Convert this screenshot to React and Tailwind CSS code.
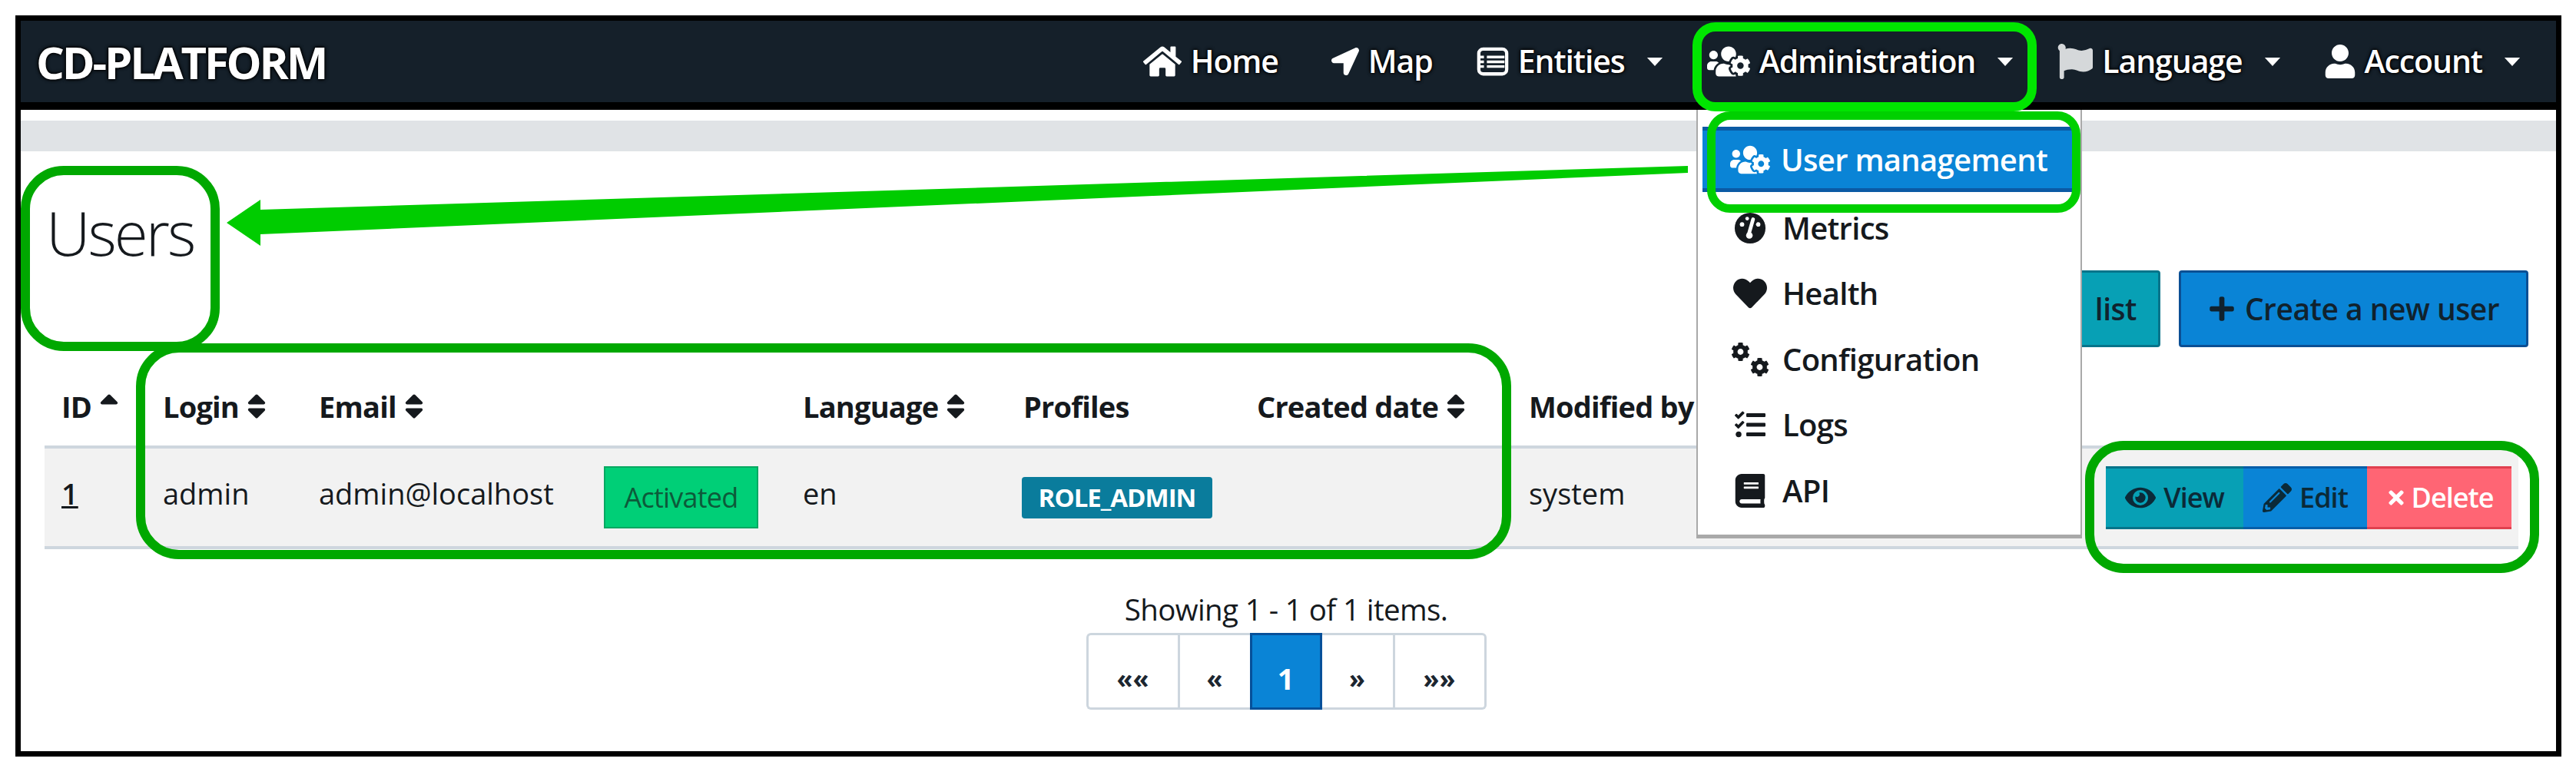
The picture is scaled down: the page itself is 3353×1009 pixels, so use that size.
import React from "react";
import {
  FaHome,
  FaLocationArrow,
  FaUsersCog,
  FaFlag,
  FaUser,
  FaHeart,
  FaCog,
  FaTasks,
  FaBook,
  FaPlus,
  FaEye,
  FaPencilAlt,
  FaTimes,
  FaSort,
  FaSortUp,
} from "react-icons/fa";

const glow = "[text-shadow:0_0_5px_#000,0_0_4px_#000,0_0_2px_#000]";

const EntitiesIcon = ({ className }) => (
  <svg viewBox="0 0 44 40" className={className} fill="none" stroke="currentColor">
    <rect x="3" y="3" width="38" height="34" rx="6" strokeWidth="4.5" />
    <path d="M14 14H38M14 20.5H38M14 27H38" strokeWidth="3.5" />
    <path d="M5 14H10M5 20.5H10M5 27H10" strokeWidth="3.5" />
  </svg>
);

const MetricsIcon = ({ className }) => (
  <svg viewBox="0 0 44 44" className={className}>
    <circle cx="22" cy="22" r="21" fill="currentColor" />
    <path d="M20 31L26 10" stroke="#fff" strokeWidth="5" strokeLinecap="round" />
    <circle cx="21" cy="32" r="4.5" fill="#fff" />
    <circle cx="11" cy="17" r="3" fill="#fff" />
    <circle cx="18" cy="9" r="2.5" fill="#fff" />
    <circle cx="33" cy="17" r="3" fill="#fff" />
  </svg>
);

const Caret = ({ className }) => (
  <svg viewBox="0 0 24 14" className={className} fill="currentColor">
    <path d="M1 1H23L12 13Z" />
  </svg>
);

const navItems = [
  { label: "Home", Icon: FaHome, icon: "w-[50px] h-[46px]", extra: "mr-[12px]" },
  { label: "Map", Icon: FaLocationArrow, icon: "w-[36px] h-[36px]" },
  { label: "Entities", Icon: EntitiesIcon, icon: "w-[42px] h-[40px]", caret: true },
  { label: "Administration", Icon: FaUsersCog, icon: "w-[56px] h-[50px]", caret: true },
  { label: "Language", Icon: FaFlag, icon: "w-[46px] h-[46px] text-[#d5d8da]", caret: true },
  { label: "Account", Icon: FaUser, icon: "w-[40px] h-[44px]", caret: true },
];

const SortHead = ({ label, up }) => (
  <span className="inline-flex items-center gap-[6px]">
    {label}
    {up ? (
      <FaSortUp className="w-[34px] h-[40px]" />
    ) : (
      <FaSort className="w-[34px] h-[40px]" />
    )}
  </span>
);

const NavBar = () => (
  <div className="h-[116px] shrink-0 bg-[#15202a] border-b-[10px] border-black flex items-center justify-between pl-[20px] pr-[46px] text-white font-semibold">
    <span className={`text-[58px] font-bold tracking-[-3.2px] ${glow}`}>
      CD-PLATFORM
    </span>
    <div className="flex items-center gap-[57px] text-[41px] tracking-[-1.1px]">
      {navItems.map(({ label, Icon, icon, caret, extra }) => (
        <div key={label} className={`flex items-center gap-[12px] ${glow} ${extra || ""}`}>
          <Icon className={icon} />
          <span>{label}</span>
          {caret && <Caret className="w-[22px] h-[13px] ml-[16px]" />}
        </div>
      ))}
    </div>
  </div>
);

const ConfigIcon = () => (
  <span className="w-[50px] h-[46px] flex justify-between">
    <FaCog className="w-[26px] h-[26px] self-start" />
    <FaCog className="w-[26px] h-[26px] self-end" />
  </span>
);

const MenuRow = ({ label, icon }) => (
  <div className="h-[85.5px] flex items-center gap-[18px] pl-[44px]">
    <span className="w-[48px] flex justify-center">{icon}</span>
    <span>{label}</span>
  </div>
);

const Dropdown = () => (
  <div className="absolute left-[2208px] top-[143px] w-[502px] h-[558px] bg-white border-x-[2px] border-b-[5px] border-[#a9a9a9] pt-[22px] font-semibold text-[40px] text-[#15191d] tracking-[-0.7px]">
    <div className="h-[85px] mb-[4px] ml-[6px] mr-[8px] bg-[#0a84d6] border-y-[5px] border-[#0b5aa4] flex items-center gap-[14px] pl-[36px] text-white">
      <FaUsersCog className="w-[52px] h-[50px]" />
      <span>User management</span>
    </div>
    <MenuRow label="Metrics" icon={<MetricsIcon className="w-[42px] h-[42px]" />} />
    <MenuRow label="Health" icon={<FaHeart className="w-[44px] h-[44px]" />} />
    <MenuRow label="Configuration" icon={<ConfigIcon />} />
    <MenuRow label="Logs" icon={<FaTasks className="w-[40px] h-[40px]" />} />
    <MenuRow label="API" icon={<FaBook className="w-[40px] h-[44px]" />} />
  </div>
);

const UsersTable = () => (
  <table className="w-[3220px] table-fixed border-collapse text-[38px] text-[#15191d]">
    <colgroup>
      <col className="w-[132px]" />
      <col className="w-[203px]" />
      <col className="w-[371px]" />
      <col className="w-[259px]" />
      <col className="w-[287px]" />
      <col className="w-[304px]" />
      <col className="w-[354px]" />
      <col className="w-[432px]" />
      <col className="w-[320px]" />
      <col />
    </colgroup>
    <thead>
      <tr className="h-[104px] text-left font-bold tracking-[-0.8px]">
        <th className="pl-[22px]"><SortHead label="ID" up /></th>
        <th className="pl-[22px]"><SortHead label="Login" /></th>
        <th className="pl-[22px]"><SortHead label="Email" /></th>
        <th></th>
        <th className="pl-[22px]"><SortHead label="Language" /></th>
        <th className="pl-[22px]">Profiles</th>
        <th className="pl-[22px] whitespace-nowrap"><SortHead label="Created date" /></th>
        <th className="pl-[22px] whitespace-nowrap">Modified by</th>
        <th></th>
        <th></th>
      </tr>
    </thead>
    <tbody>
      <tr className="h-[131px] bg-[#f2f2f2] border-y-[4px] border-[#ced6de]">
        <td className="pl-[22px] pb-[10px] font-semibold underline">1</td>
        <td className="pl-[22px] pb-[10px]">admin</td>
        <td className="pl-[22px] pb-[10px] whitespace-nowrap">admin@localhost</td>
        <td className="pl-[22px]">
          <span className="w-[201px] h-[81px] bg-[#00cf77] border-[2px] border-[#08a862] text-[#0d5a3a] text-[36px] flex items-center justify-center tracking-[-0.8px]">
            Activated
          </span>
        </td>
        <td className="pl-[22px] pb-[10px]">en</td>
        <td className="pl-[20px]">
          <span className="w-[248px] h-[54px] rounded-[4px] bg-[#0a7c9c] text-white font-bold text-[33px] flex items-center justify-center tracking-[-1px]">
            ROLE_ADMIN
          </span>
        </td>
        <td></td>
        <td className="pl-[22px] pb-[10px]">system</td>
        <td></td>
        <td className="pl-[21px]">
          <div className="flex h-[82px] w-[528px] text-[36px] font-semibold tracking-[-1px]">
            <span className="w-[179px] bg-[#07a0b5] border-y-[3px] border-[#06748a] flex items-center justify-center gap-[10px] text-[#0b2a38]">
              <FaEye className="w-[40px] h-[40px]" /> View
            </span>
            <span className="w-[161px] bg-[#0a84d6] border-y-[3px] border-[#075ea8] flex items-center justify-center gap-[10px] text-[#0b2a38]">
              <FaPencilAlt className="w-[38px] h-[38px]" /> Edit
            </span>
            <span className="w-[188px] bg-[#ff6574] border-y-[3px] border-[#e0404f] flex items-center justify-center gap-[6px] text-white">
              <FaTimes className="w-[28px] h-[28px]" /> Delete
            </span>
          </div>
        </td>
      </tr>
    </tbody>
  </table>
);

const Pager = () => (
  <div className="flex flex-col items-center mt-[53px] pr-[6px] text-[#15191d]">
    <p className="text-[38.5px] leading-[50px] tracking-[-0.6px]">
      Showing <span className="font-medium">1 - 1</span> of <span className="font-medium">1</span> items.
    </p>
    <div className="flex h-[100px] mt-[6px] font-bold text-[34px] text-[#1c2630]">
      <span className="w-[119px] pt-[18px] flex items-center justify-center border-[3px] border-r-0 border-[#cdd6de] rounded-l-[6px]">««</span>
      <span className="w-[94px] pt-[18px] flex items-center justify-center border-[3px] border-r-0 border-[#cdd6de]">«</span>
      <span className="w-[94px] pt-[18px] flex items-center justify-center bg-[#0a84d6] border-[3px] border-[#06509a] text-white text-[38px]">1</span>
      <span className="w-[95px] pt-[18px] flex items-center justify-center border-[3px] border-l-0 border-[#cdd6de]">»</span>
      <span className="w-[119px] pt-[18px] flex items-center justify-center border-[3px] border-l-0 border-[#cdd6de] rounded-r-[6px]">»»</span>
    </div>
  </div>
);

const Annotations = () => (
  <>
    <div className="absolute left-[27px] top-[216px] w-[259px] h-[241px] border-[12px] border-[#00a800] rounded-[56px]" />
    <div className="absolute left-[177px] top-[447px] w-[1790px] h-[281px] border-[12px] border-[#00a800] rounded-[56px]" />
    <div className="absolute left-[2714px] top-[574px] w-[591px] h-[172px] border-[12px] border-[#00a800] rounded-[50px]" />
    <div className="absolute left-[2203px] top-[29px] w-[448px] h-[116px] border-[12px] border-[#00e600] rounded-[30px]" />
    <div className="absolute left-[2222px] top-[145px] w-[486px] h-[132px] border-[11px] border-[#00d000] rounded-[30px]" />
    <svg className="absolute left-0 top-0" width="3353" height="1009">
      <polygon
        points="295,290 339,260 339,273 2197,216 2197,225 339,305 339,320"
        fill="#00cc00"
      />
    </svg>
  </>
);

const App = () => {
  return (
    <div className="relative w-[3353px] h-[1009px] bg-white pt-[20px] pl-[20px] overflow-hidden font-['Open_Sans',sans-serif]">
      <div className="w-[3314px] h-[965px] border-[7px] border-black flex flex-col">
        <NavBar />
        <div className="h-[40px] mt-[14px] shrink-0 bg-[#e0e3e6]" />
        {/* heading + buttons */}
        <div className="h-[281px] shrink-0 flex justify-between items-start pl-[33px] pr-[36px]">
          <h2 className="mt-[55px] text-[80px] leading-[100px] font-light tracking-[-3px] text-[#15191d]">
            Users
          </h2>
          <div className="mt-[155px] flex gap-[24px] text-[39px] font-semibold text-[#10222e] tracking-[-0.5px]">
            <span className="w-[300px] h-[100px] bg-[#07a0b5] border-[3px] border-[#06748a] rounded-[4px] flex items-center justify-end pr-[28px] [word-spacing:14px]">
              Refresh list
            </span>
            <span className="w-[455px] h-[100px] bg-[#0a84d6] border-[3px] border-[#0b4f94] rounded-[4px] flex items-center justify-center gap-[12px]">
              <FaPlus className="w-[36px] h-[36px]" /> Create a new user
            </span>
          </div>
        </div>
        <div className="pl-[31px]">
          <UsersTable />
        </div>
        <Pager />
      </div>
      <Dropdown />
      <Annotations />
    </div>
  );
};

export default App;
